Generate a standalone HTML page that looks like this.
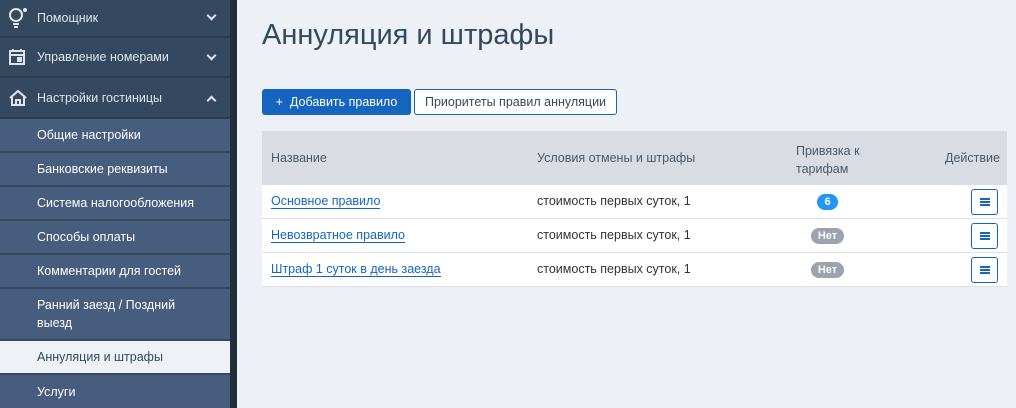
<!DOCTYPE html><html><head><meta charset="utf-8"><style>
*{box-sizing:border-box;margin:0;padding:0}
body{width:1016px;height:408px;overflow:hidden;background:#edf0f4;font-family:"Liberation Sans","DejaVu Sans",sans-serif;position:relative}
.sb{position:absolute;left:0;top:0;width:230px;height:408px;background:#465d7e}
.strip{position:absolute;left:230px;top:0;width:7px;height:408px;background:#242f3c}
.it{position:absolute;left:0;width:230px;color:#fff;font-size:12.5px;display:flex;align-items:center}
.top{background:#34495f;color:#dfe5ee;height:39px;border-bottom:2px solid #2a3b4e}
.top span{position:absolute;left:37px}
.sub{background:#465d7e;border-bottom:2px solid #34485f;padding-left:37px}
.act{background:#eef1f5;color:#34495e}
.chev{position:absolute;left:208px;width:7px;height:7px;border-right:2px solid #dfe5ee;border-bottom:2px solid #dfe5ee}
.ic{position:absolute;left:8px}
h1{position:absolute;left:262px;top:19px;font-size:29px;font-weight:normal;color:#34495e}
.b1{position:absolute;left:262px;top:89px;width:149px;height:26px;background:#1565c0;border-radius:3px;color:#fff;font-size:12.5px;display:flex;align-items:center;justify-content:center}
.b2{position:absolute;left:414px;top:89px;width:203px;height:26px;background:#fff;border:1px solid #1565c0;border-radius:3px;color:#34495e;font-size:12.5px;display:flex;align-items:center;justify-content:center}
.tbl{position:absolute;left:262px;top:131px;width:745px}
.hd{height:54px;background:#d9dde3;position:relative;color:#4a5868;font-size:12.5px}
.row{height:34px;background:#fff;border-bottom:1px solid #dde1e6;position:relative;font-size:12.5px;color:#333}
.c{position:absolute}
a{color:#1565c0;text-decoration:none;border-bottom:1px solid #1565c0}
.bd{position:absolute;left:549px;top:9px;height:16px;border-radius:8px;color:#fff;font-size:11px;font-weight:bold;display:flex;align-items:center;justify-content:center}
.mb{position:absolute;left:709px;top:4px;width:27px;height:26px;border:1px solid #1565c0;border-radius:3px;background:#fff}
.mb i{position:absolute;left:8px;width:10px;height:2px;background:#1565c0}
</style></head><body>
<div class="sb"></div>
<div class="it top" style="top:0;height:38px"><svg class="ic" width="20" height="22" viewBox="0 0 20 22" fill="none" stroke="#dfe5ee" stroke-width="2"><circle cx="8" cy="8" r="6"/><path d="M5 17h6M6 20h4"/><circle cx="17" cy="3" r="1" fill="#dfe5ee"/></svg><span>Помощник</span><div class="chev" style="transform:rotate(45deg);top:12px"></div></div>
<div class="it top" style="top:38px;height:40px"><svg class="ic" width="18" height="18" viewBox="0 0 18 18" fill="none" stroke="#dfe5ee" stroke-width="2"><rect x="2" y="3" width="14" height="13"/><path d="M2 7h14M5 1v3M13 1v3"/><rect x="10" y="10" width="3" height="3" fill="#dfe5ee"/></svg><span>Управление номерами</span><div class="chev" style="transform:rotate(45deg);top:14px"></div></div>
<div class="it top" style="top:78px;height:41px"><svg class="ic" width="20" height="18" viewBox="0 0 20 18" fill="none" stroke="#dfe5ee" stroke-width="2"><path d="M2 9L10 2l8 7M4 7v9h12V7M8 16v-5h4v5"/></svg><span>Настройки гостиницы</span><div class="chev" style="transform:rotate(-135deg);top:19px"></div></div>
<div class="it sub" style="top:119px;height:34px">Общие настройки</div>
<div class="it sub" style="top:153px;height:34px">Банковские реквизиты</div>
<div class="it sub" style="top:187px;height:34px">Система налогообложения</div>
<div class="it sub" style="top:221px;height:34px">Способы оплаты</div>
<div class="it sub" style="top:255px;height:34px">Комментарии для гостей</div>
<div class="it sub" style="top:289px;height:52px;line-height:18px">Ранний заезд / Поздний<br>выезд</div>
<div class="it sub act" style="top:341px;height:34px">Аннуляция и штрафы</div>
<div class="it sub" style="top:375px;height:33px;border:0">Услуги</div>
<div class="strip"></div>
<h1>Аннуляция и штрафы</h1>
<div class="b1">+&nbsp;&nbsp;Добавить правило</div>
<div class="b2">Приоритеты правил аннуляции</div>
<div class="tbl">
<div class="hd"><div class="c" style="left:9px;top:20px">Название</div><div class="c" style="left:275px;top:20px">Условия отмены и штрафы</div><div class="c" style="left:534px;top:11px;line-height:18px">Привязка к<br>тарифам</div><div class="c" style="left:683px;top:20px">Действие</div></div>
<div class="row"><div class="c" style="left:9px;top:9px"><a>Основное правило</a></div><div class="c" style="left:275px;top:9px">стоимость первых суток, 1</div><div class="bd" style="left:555px;width:21px;background:#2196f3">6</div><div class="mb"><i style="top:8px"></i><i style="top:11px"></i><i style="top:14px"></i></div></div>
<div class="row"><div class="c" style="left:9px;top:9px"><a>Невозвратное правило</a></div><div class="c" style="left:275px;top:9px">стоимость первых суток, 1</div><div class="bd" style="width:33px;background:#9aa3ae">Нет</div><div class="mb"><i style="top:8px"></i><i style="top:11px"></i><i style="top:14px"></i></div></div>
<div class="row"><div class="c" style="left:9px;top:9px"><a>Штраф 1 суток в день заезда</a></div><div class="c" style="left:275px;top:9px">стоимость первых суток, 1</div><div class="bd" style="width:33px;background:#9aa3ae">Нет</div><div class="mb"><i style="top:8px"></i><i style="top:11px"></i><i style="top:14px"></i></div></div>
</div>
</body></html>
